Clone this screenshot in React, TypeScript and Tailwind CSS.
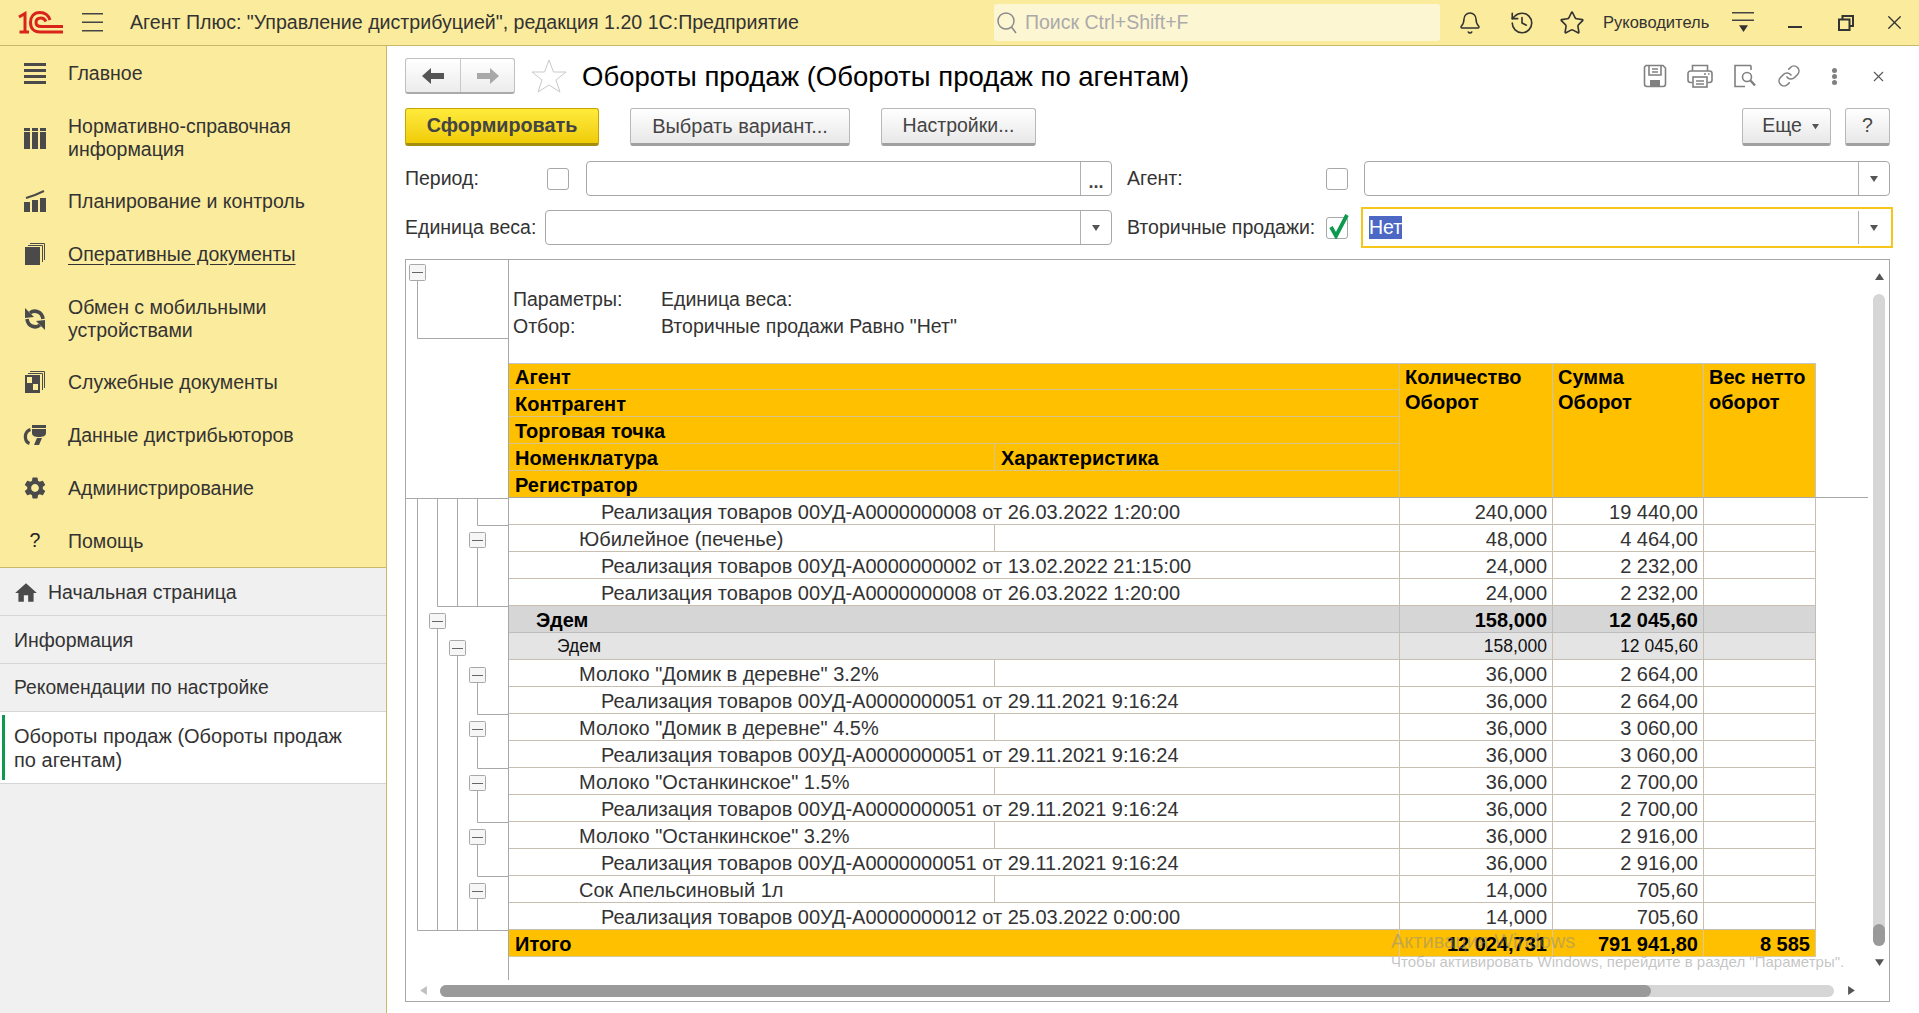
import { Bell, History, Link, Star, X } from "lucide-react";
import { MdHome, MdSettings } from "react-icons/md";

const GRID = "grid grid-cols-[486px_405px_153px_151px_112px]";

const Logo = () => (
  <svg width="46" height="23" viewBox="0 0 46 23" fill="none" stroke="#d9241b" strokeWidth="3">
    <path d="M1 6 L7 2.5 V21.5 M1.5 21 H11" />
    <path d="M32 9 C30 3 25 1.5 22 1.5 C15.5 1.5 12.5 6 12.5 11.5 C12.5 17.5 16 21 22 21 H45" />
    <path d="M45 15.5 H23.5 C20 15.5 18 14 18 11.5 C18 8.5 20 7 23 7 C25.5 7 27 8.5 28 10.5" />
  </svg>
);

const Lines = ({ n, w, gap, color = "#444", h = 2 }: { n: number; w: number; gap: number; color?: string; h?: number }) => (
  <svg width={w} height={n * h + (n - 1) * gap} fill={color}>
    {Array.from({ length: n }).map((_, i) => (
      <rect key={i} x="0" y={i * (h + gap)} width={w} height={h} />
    ))}
  </svg>
);

const Tri = ({ dir = "down", size = 8, color = "#555" }: { dir?: "down" | "up" | "left" | "right"; size?: number; color?: string }) => {
  const pts = { down: "0,1 8,1 4,7", up: "0,7 8,7 4,1", left: "7,0 7,8 1,4", right: "1,0 1,8 7,4" }[dir];
  return (
    <svg width={size} height={size} viewBox="0 0 8 8" fill={color}>
      <polygon points={pts} />
    </svg>
  );
};

const IconCatalog = () => (
  <svg width="22" height="21" viewBox="0 0 22 21" fill="#4a4a4a">
    <rect x="0" y="0" width="6" height="3" />
    <rect x="8" y="0" width="6" height="3" />
    <rect x="16" y="0" width="6" height="3" />
    <rect x="0" y="4" width="6" height="17" />
    <rect x="8" y="4" width="6" height="17" />
    <rect x="16" y="4" width="6" height="17" />
  </svg>
);

const IconPlan = () => (
  <svg width="22" height="22" viewBox="0 0 22 22" fill="#4a4a4a">
    <rect x="0" y="12" width="6" height="10" />
    <rect x="8" y="10" width="6" height="12" />
    <rect x="16" y="8" width="6" height="14" />
    <path d="M2 8 L11 5 L20 1" stroke="#4a4a4a" strokeWidth="2" fill="none" />
  </svg>
);

const IconDocs = () => (
  <svg width="20" height="22" viewBox="0 0 20 22" fill="none" stroke="#4a4a4a">
    <path d="M5 .5 H19.5 V17" />
    <path d="M3 2.5 H17.5 V19" />
    <rect x="0" y="4" width="15" height="18" fill="#4a4a4a" stroke="none" />
  </svg>
);

const IconServiceDocs = () => (
  <svg width="20" height="22" viewBox="0 0 20 22" fill="none" stroke="#4a4a4a">
    <path d="M5 .5 H19.5 V17" />
    <path d="M3 2.5 H17.5 V19" />
    <rect x="0" y="4" width="15" height="18" fill="#4a4a4a" stroke="none" />
    <rect x="2" y="6" width="5" height="6" fill="#fbeb9c" stroke="none" />
    <rect x="8" y="13" width="5" height="6" fill="#fbeb9c" stroke="none" />
  </svg>
);

const IconExchange = () => (
  <svg width="22" height="22" viewBox="0 0 22 22" fill="#4a4a4a">
    <path d="M6 5 C10 1.5 18 3 19 11" fill="none" stroke="#4a4a4a" strokeWidth="3.6" />
    <polygon points="1,0 1,10 10,9" />
    <path d="M16 17 C12 20.5 4 19 3 11" fill="none" stroke="#4a4a4a" strokeWidth="3.6" />
    <polygon points="21,22 21,12 12,13" />
  </svg>
);

const IconDistrib = () => (
  <svg width="24" height="22" viewBox="0 0 24 22" fill="#4a4a4a">
    <path d="M9 1 H23 V4 H9 Z M9 5 H23 V9 C23 12 20 13 16 13 C12 13 9 12 9 9 Z" />
    <path d="M7 4 C2 6 0 10 1 15 C1.5 18 3 20 6 21 L7 18 C5 17 4 15 4 13 C4 10 5 8 8 7 Z" />
    <path d="M14 14 H19 L16 21 H11 Z" />
  </svg>
);

const IconSave = () => (
  <svg width="24" height="24" viewBox="0 0 24 24" fill="none" stroke="#808080" strokeWidth="1.6">
    <path d="M3 1.5 H20 L22.5 4 V20 A2.5 2.5 0 0 1 20 22.5 H4 A2.5 2.5 0 0 1 1.5 20 V3 Z" />
    <path d="M6 2 V11 H18 V2 M9 5 H15 M9 8 H15" />
    <rect x="7" y="16" width="10" height="6" fill="#808080" stroke="none" />
  </svg>
);

const IconPrint = () => (
  <svg width="26" height="24" viewBox="0 0 26 24" fill="none" stroke="#808080" strokeWidth="1.6">
    <path d="M5.5 7 V1.5 H20.5 V7" />
    <path d="M5.5 18.5 H3.5 A2.5 2.5 0 0 1 1 16 V9.5 A2.5 2.5 0 0 1 3.5 7 H22.5 A2.5 2.5 0 0 1 25 9.5 V16 A2.5 2.5 0 0 1 22.5 18.5 H20.5" />
    <rect x="6" y="13" width="14" height="10" />
    <path d="M9 17 H17 M9 20 H17 M17 10 H19 M21 10 H22.5" />
  </svg>
);

const IconPreview = () => (
  <svg width="24" height="24" viewBox="0 0 24 24" fill="none" stroke="#808080" strokeWidth="1.6">
    <path d="M18 1.5 H2 V22.5 H12 M18 1.5 V6" />
    <circle cx="14" cy="13" r="4.5" />
    <path d="M17.5 16.5 L22 21.5" strokeWidth="2.4" />
  </svg>
);

const IconRestore = () => (
  <svg width="16" height="16" viewBox="0 0 16 16" fill="none" stroke="#333" strokeWidth="2">
    <path d="M4.5 4 V1 H15 V11 H12" />
    <rect x="1" y="4.5" width="10.5" height="10.5" />
  </svg>
);

const Btn = ({ w, children, className = "" }: { w: string; children: React.ReactNode; className?: string }) => (
  <button
    className={`${w} h-[38px] rounded-[3px] border border-[#b8b8b8] border-b-[3px] border-b-[#a0a0a0] bg-gradient-to-b from-white to-[#e8e8e8] text-[19.5px] text-[#444] flex items-center justify-center ${className}`}
  >
    {children}
  </button>
);

const Check = ({ checked = false }: { checked?: boolean }) => (
  <div className="relative w-[22px] h-[22px] shrink-0 rounded-[3px] border border-[#a8a8a8] bg-white">
    {checked && (
      <svg className="absolute left-[0px] -top-[5px]" width="22" height="26" viewBox="0 0 22 26" fill="none" stroke="#0d9a4e" strokeWidth="3.8">
        <path d="M4 14 L9 23 L20 2" />
      </svg>
    )}
  </div>
);

const Field = ({ w, end, focused = false, value }: { w: string; end: React.ReactNode; focused?: boolean; value?: string }) => (
  <div
    className={`${w} h-[35px] shrink-0 flex items-stretch bg-white ${
      focused ? "outline-2 outline-offset-[1px] outline-[#f5c71a] border border-transparent" : "rounded-[4px] border border-[#a8a8a8]"
    }`}
  >
    <div className="flex-1 flex items-center pl-[4px]">
      {value && <span className="bg-[#4c68c4] text-white text-[19.5px] leading-[23px]">{value}</span>}
    </div>
    <div className="w-[31px] border-l border-[#b0b0b0] flex items-center justify-center text-[#444] text-[18px] font-bold">{end}</div>
  </div>
);

type RowKind = "doc" | "item" | "group" | "sub" | "total";
const rows: [RowKind, string, string, string, string?][] = [
  ["doc", "Реализация товаров 00УД-А0000000008 от 26.03.2022 1:20:00", "240,000", "19 440,00"],
  ["item", "Юбилейное (печенье)", "48,000", "4 464,00"],
  ["doc", "Реализация товаров 00УД-А0000000002 от 13.02.2022 21:15:00", "24,000", "2 232,00"],
  ["doc", "Реализация товаров 00УД-А0000000008 от 26.03.2022 1:20:00", "24,000", "2 232,00"],
  ["group", "Эдем", "158,000", "12 045,60"],
  ["sub", "Эдем", "158,000", "12 045,60"],
  ["item", 'Молоко "Домик в деревне" 3.2%', "36,000", "2 664,00"],
  ["doc", "Реализация товаров 00УД-А0000000051 от 29.11.2021 9:16:24", "36,000", "2 664,00"],
  ["item", 'Молоко "Домик в деревне" 4.5%', "36,000", "3 060,00"],
  ["doc", "Реализация товаров 00УД-А0000000051 от 29.11.2021 9:16:24", "36,000", "3 060,00"],
  ["item", 'Молоко "Останкинское" 1.5%', "36,000", "2 700,00"],
  ["doc", "Реализация товаров 00УД-А0000000051 от 29.11.2021 9:16:24", "36,000", "2 700,00"],
  ["item", 'Молоко "Останкинское" 3.2%', "36,000", "2 916,00"],
  ["doc", "Реализация товаров 00УД-А0000000051 от 29.11.2021 9:16:24", "36,000", "2 916,00"],
  ["item", "Сок Апельсиновый 1л", "14,000", "705,60"],
  ["doc", "Реализация товаров 00УД-А0000000012 от 25.03.2022 0:00:00", "14,000", "705,60"],
  ["total", "Итого", "12 024,731", "791 941,80", "8 585"],
];

const kindStyle: Record<RowKind, { row: string; first: string; border: string }> = {
  doc: { row: "text-[20px] text-[#333]", first: "pl-[92px]", border: "border-[#c9bfb0]" },
  item: { row: "text-[20px] text-[#333]", first: "pl-[70px]", border: "border-[#c9bfb0]" },
  group: { row: "text-[20px] font-bold text-black bg-[#d6d6d6]", first: "pl-[27px]", border: "border-[#bdbdbd]" },
  sub: { row: "text-[17.5px] text-[#111] bg-[#e4e4e4]", first: "pl-[48px]", border: "border-[#c9bfb0]" },
  total: { row: "text-[20px] font-bold text-black bg-[#ffc000]", first: "pl-[6px]", border: "border-[#d8c9a0]" },
};

const Row = ({ kind, name, qty, sum, weight }: { kind: RowKind; name: string; qty: string; sum: string; weight?: string }) => {
  const s = kindStyle[kind];
  const cell = `h-[27px] pt-[1px] border-r border-b ${s.border} flex items-center leading-none whitespace-nowrap`;
  return (
    <div className={`${GRID} w-max ${s.row}`}>
      {kind === "item" ? (
        <>
          <div className={`${cell} ${s.first}`}>{name}</div>
          <div className={cell} />
        </>
      ) : (
        <div className={`${cell} ${s.first} col-span-2`}>{name}</div>
      )}
      <div className={`${cell} justify-end pr-[5px]`}>{qty}</div>
      <div className={`${cell} justify-end pr-[5px]`}>{sum}</div>
      <div className={`${cell} justify-end pr-[5px]`}>{weight}</div>
    </div>
  );
};

const Fold = ({ x, y, h = 15 }: { x: number; y: number; h?: number }) => (
  <g>
    <rect x={x + 0.5} y={y + 0.5} width="16" height={h} rx="1" fill="#f6f6f6" stroke="#a8a8a8" />
    <path d={`M${x + 3} ${y + Math.ceil(h / 2) + 0.5} H${x + 14}`} stroke="#666" />
  </g>
);

const Tree = () => {
  const groups = [660, 714, 768, 822];
  return (
    <svg className="w-[102px] h-[720px] shrink-0" viewBox="406 260 102 720" fill="none" stroke="#a8a8a8">
      <path d="M417.5 280 V338.5 H508" />
      <path d="M406 498.5 H508" />
      <path d="M417.5 498 V930.5 H508" />
      <path d="M437.5 498 V606.5 H508 M437.5 628 V930" />
      <path d="M457.5 498 V606 M457.5 655 V930" />
      <path d="M477.5 498 V525.5 H508 M477.5 547 V606" />
      {groups.map((r) => (
        <path key={r} d={`M477.5 ${r + 22} V${r + 54}.5 H508`} />
      ))}
      <path d="M477.5 898 V930" />
      <Fold x={409} y={264} h={16} />
      <Fold x={469} y={532} />
      <Fold x={429} y={613} />
      <Fold x={449} y={640} />
      {groups.map((r) => (
        <Fold key={r} x={469} y={r + 7} />
      ))}
      <Fold x={469} y={883} />
    </svg>
  );
};

const nav: { label: string[]; icon: React.ReactNode; underline?: boolean }[] = [
  { label: ["Главное"], icon: <Lines n={4} w={22} gap={3} h={3} color="#4a4a4a" /> },
  { label: ["Нормативно-справочная", "информация"], icon: <IconCatalog /> },
  { label: ["Планирование и контроль"], icon: <IconPlan /> },
  { label: ["Оперативные документы"], icon: <IconDocs />, underline: true },
  { label: ["Обмен с мобильными", "устройствами"], icon: <IconExchange /> },
  { label: ["Служебные документы"], icon: <IconServiceDocs /> },
  { label: ["Данные дистрибьюторов"], icon: <IconDistrib /> },
  { label: ["Администрирование"], icon: <MdSettings size={26} color="#4a4a4a" /> },
  { label: ["Помощь"], icon: <span className="text-[19.5px] text-[#222]">?</span> },
];

const headCell = "bg-[#ffc000] border-r border-b border-[#d8c48a] pl-[6px] pt-[1px] flex items-center";
const headCol = "row-start-1 row-span-5 bg-[#ffc000] border-t border-t-[#c4c4c4] border-r border-r-[#c4c4c4] border-b border-b-[#a8a8a8] pl-[5px] pt-[1px] leading-[25px]";

export default function App() {
  return (
    <div className="relative w-[1919px] h-[1013px] overflow-hidden bg-white font-['Liberation_Sans',Arial,sans-serif] text-[19.5px] text-[#333]">
      {/* top bar */}
      <header className="h-[46px] bg-[#fbeb9c] border-b border-[#c9b868] flex items-center">
        <div className="ml-[18px] w-[46px]">
          <Logo />
        </div>
        <div className="ml-[18px] w-[48px]">
          <Lines n={3} w={21} gap={7} h={1.5} color="#444" />
        </div>
        <div className="whitespace-nowrap w-[864px] text-[19.6px]">Агент Плюс: "Управление дистрибуцией", редакция 1.20 1С:Предприятие</div>
        <div className="w-[446px] h-[37px] rounded-[3px] bg-[#fdf6d3] flex items-center text-[#aaa] pl-[2px]">
          <svg className="mr-[7px]" width="22" height="24" viewBox="0 0 22 24" fill="none" stroke="#8a8a8a" strokeWidth="1.5">
            <circle cx="10" cy="10" r="8" />
            <path d="M15.5 16 L20 22" />
          </svg>
          Поиск Ctrl+Shift+F
        </div>
        <Bell className="ml-[18px]" size={24} strokeWidth={1.5} color="#333" />
        <History className="ml-[27px]" size={26} strokeWidth={1.5} color="#333" />
        <Star className="ml-[24px]" size={26} strokeWidth={1.5} color="#333" />
        <span className="ml-[18px] w-[108px] text-[16.5px] whitespace-nowrap">Руководитель</span>
        <div className="ml-[21px] flex flex-col items-center gap-[3px] w-[22px]">
          <Lines n={2} w={22} gap={6} h={1.5} color="#444" />
          <Tri size={9} color="#333" />
        </div>
        <div className="ml-[34px] w-[14px] h-[2.5px] self-center mt-[9px] bg-[#333]" />
        <div className="ml-[36px]">
          <IconRestore />
        </div>
        <X className="ml-[29px]" size={23} strokeWidth={1.4} color="#333" />
      </header>

      <div className="flex h-[967px]">
        {/* sidebar */}
        <aside className="w-[387px] shrink-0 border-r border-[#c9b868] bg-[#f0f0f0] flex flex-col">
          <div className="h-[522px] bg-[#fbeb9c] border-b border-[#c9b868]">
            {nav.map((item) => (
              <div key={item.label[0]} className={`flex items-center ${item.label.length > 1 ? "h-[75px] pt-[3px]" : "h-[53px] pt-[1px]"}`}>
                <div className="w-[68px] flex justify-center pl-[2px] shrink-0">{item.icon}</div>
                <div className="leading-[23px]">
                  {item.label.map((l) => (
                    <div key={l} className={item.underline ? "underline underline-offset-[3px]" : ""}>
                      {l}
                    </div>
                  ))}
                </div>
              </div>
            ))}
          </div>
          <div className="h-[48px] pl-[13px] pt-[2px] flex items-center border-b border-[#d6d6d6]">
            <MdHome size={26} color="#4a4a4a" className="mr-[9px]" />
            Начальная страница
          </div>
          <div className="h-[48px] pl-[14px] pt-[2px] flex items-center border-b border-[#d6d6d6]">Информация</div>
          <div className="h-[48px] pl-[14px] pt-[1px] text-[19.3px] flex items-center border-b border-[#d6d6d6]">Рекомендации по настройке</div>
          <div className="h-[72px] bg-white border-b border-[#d6d6d6] flex items-center pl-[2px]">
            <div className="w-[3px] h-[65px] bg-[#0d9a4e] mr-[9px]" />
            <div className="leading-[24px] text-[20px] pt-[1px]">
              Обороты продаж (Обороты продаж
              <br />
              по агентам)
            </div>
          </div>
        </aside>

        {/* report form */}
        <main className="flex-1 pl-[18px] pr-[29px]">
          <div className="mt-[12px] h-[36px] flex items-center">
            <div className="w-[110px] h-[36px] rounded-[3px] border border-[#c0c0c0] border-b-[2px] border-b-[#aaa] bg-gradient-to-b from-white to-[#ececec] flex">
              <div className="w-[55px] border-r border-[#c8c8c8] flex items-center justify-center">
                <svg width="22" height="16" viewBox="0 0 22 16" fill="#555">
                  <path d="M0 8 L9 0 V5 H22 V11 H9 V16 Z" />
                </svg>
              </div>
              <div className="flex-1 flex items-center justify-center">
                <svg width="22" height="16" viewBox="0 0 22 16" fill="#a8a8a8">
                  <path d="M22 8 L13 0 V5 H0 V11 H13 V16 Z" />
                </svg>
              </div>
            </div>
            <svg className="ml-[16px]" width="36" height="34" viewBox="0 0 36 34" fill="white" stroke="#c9c9c9">
              <polygon points="18,1 22.5,13 35,13 25,21 29,33 18,26 7,33 11,21 1,13 13.5,13" />
            </svg>
            <h1 className="ml-[15px] text-[27.5px] leading-none text-black font-normal whitespace-nowrap pt-[1px]">Обороты продаж (Обороты продаж по агентам)</h1>
            <div className="ml-auto flex items-center text-[#808080] mr-[3px]">
              <IconSave />
              <div className="ml-[20px]">
                <IconPrint />
              </div>
              <div className="ml-[20px]">
                <IconPreview />
              </div>
              <Link className="ml-[20px]" size={24} strokeWidth={1.6} />
              <div className="ml-[31px] flex flex-col gap-[1px]">
                <div className="w-[5px] h-[5px] rounded-full bg-[#808080]" />
                <div className="w-[5px] h-[5px] rounded-full bg-[#808080]" />
                <div className="w-[5px] h-[5px] rounded-full bg-[#808080]" />
              </div>
              <X className="ml-[33px]" size={17} strokeWidth={1.5} color="#555" />
            </div>
          </div>

          <div className="mt-[14px] h-[38px] flex">
            <button className="w-[194px] h-[38px] rounded-[3px] border border-[#c8a400] border-b-[3px] border-b-[#a58d10] bg-gradient-to-b from-[#ffeb3a] to-[#f0cc00] text-[19.8px] font-bold text-[#444]">
              Сформировать
            </button>
            <Btn w="w-[220px]" className="ml-[31px]">
              <span className="text-[20px]">Выбрать вариант...</span>
            </Btn>
            <Btn w="w-[155px]" className="ml-[31px]">
              Настройки...
            </Btn>
            <Btn w="w-[89px]" className="ml-auto pl-[8px]">
              Еще
              <span className="ml-[10px]">
                <Tri size={7} />
              </span>
            </Btn>
            <Btn w="w-[45px]" className="ml-[14px]">
              ?
            </Btn>
          </div>

          <div className="mt-[15px] h-[35px] flex items-center">
            <div className="w-[142px]">Период:</div>
            <Check />
            <Field w="w-[526px] ml-[17px]" end={<span className="leading-[14px] mt-[6px]">...</span>} />
            <div className="w-[199px] ml-[15px]">Агент:</div>
            <Check />
            <Field w="w-[526px] ml-[16px]" end={<Tri />} />
          </div>

          <div className="mt-[14px] h-[35px] flex items-center">
            <div className="w-[140px]">Единица веса:</div>
            <Field w="w-[567px]" end={<Tri />} />
            <div className="w-[199px] ml-[15px] whitespace-nowrap">Вторичные продажи:</div>
            <Check checked />
            <Field w="w-[526px] ml-[16px]" end={<Tri />} focused value="Нет" />
          </div>

          {/* spreadsheet */}
          <div className="mt-[14px] h-[743px] border border-[#a8a8a8] flex flex-col">
            <div className="h-[720px] flex">
              <Tree />
              <div className="w-[1360px] border-l border-[#a8a8a8] shrink-0">
                <div className="h-[103px] pt-[26px] leading-[27px] text-[#333]">
                  <div className="flex pl-[4px]">
                    <span className="w-[148px]">Параметры:</span>
                    <span>Единица веса:</span>
                  </div>
                  <div className="flex pl-[4px]">
                    <span className="w-[148px]">Отбор:</span>
                    <span>Вторичные продажи Равно "Нет"</span>
                  </div>
                </div>
                <div className="grid grid-cols-[486px_405px_153px_151px_112px_1fr] grid-rows-[27px_27px_27px_27px_27px] font-bold text-[20px] text-black leading-none">
                  <div className={`${headCell} col-span-2 col-start-1 row-start-1 border-t border-t-[#c4c4c4]`}>Агент</div>
                  <div className={`${headCell} col-span-2 col-start-1 row-start-2`}>Контрагент</div>
                  <div className={`${headCell} col-span-2 col-start-1 row-start-3`}>Торговая точка</div>
                  <div className={`${headCell} col-start-1 row-start-4`}>Номенклатура</div>
                  <div className={`${headCell} col-start-2 row-start-4`}>Характеристика</div>
                  <div className={`${headCell} col-span-2 col-start-1 row-start-5 border-b-[#a8a8a8]`}>Регистратор</div>
                  <div className={`${headCol} col-start-3`}>
                    Количество
                    <br />
                    Оборот
                  </div>
                  <div className={`${headCol} col-start-4`}>
                    Сумма
                    <br />
                    Оборот
                  </div>
                  <div className={`${headCol} col-start-5`}>
                    Вес нетто
                    <br />
                    оборот
                  </div>
                  <div className="col-start-6 row-start-5 border-b border-[#a8a8a8]" />
                </div>
                {rows.map(([kind, name, qty, sum, weight], i) => (
                  <Row key={i} kind={kind} name={name} qty={qty} sum={sum} weight={weight} />
                ))}
              </div>
              {/* vertical scrollbar */}
              <div className="flex-1 flex flex-col items-center pt-[12px] pl-[1px]">
                <Tri dir="up" size={9} color="#555" />
                <div className="mt-[13px] w-[12px] h-[652px] rounded-[6px] bg-[#d6d6d6] flex flex-col justify-end">
                  <div className="h-[22px] rounded-[6px] bg-[#9a9a9a]" />
                </div>
                <div className="mt-[12px]">
                  <Tri size={9} color="#555" />
                </div>
              </div>
            </div>
            {/* horizontal scrollbar */}
            <div className="flex-1 flex items-center pl-[13px]">
              <Tri dir="left" size={9} color="#c0c0c0" />
              <div className="ml-[12px] w-[1394px] h-[12px] rounded-[6px] bg-[#d6d6d6]">
                <div className="w-[1211px] h-[12px] rounded-[6px] bg-[#9a9a9a]" />
              </div>
              <div className="ml-[13px]">
                <Tri dir="right" size={9} color="#555" />
              </div>
            </div>
          </div>
        </main>
      </div>

      {/* windows watermark */}
      <div className="absolute left-[1391px] top-[930px] pointer-events-none text-[#8a8a8a]/50 whitespace-nowrap">
        <div className="text-[20px] leading-[22px]">Активация Windows</div>
        <div className="text-[15px] leading-[20px]">Чтобы активировать Windows, перейдите в раздел "Параметры".</div>
      </div>
    </div>
  );
}
